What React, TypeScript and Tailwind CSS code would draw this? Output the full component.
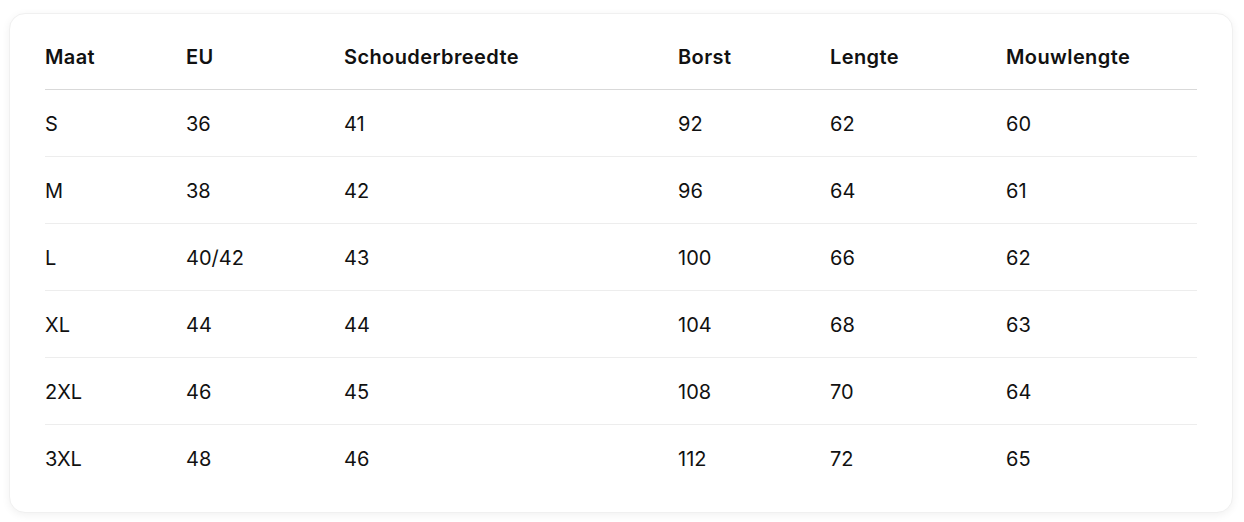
const headers = ["Maat", "EU", "Schouderbreedte", "Borst", "Lengte", "Mouwlengte"];

const rows = [
  ["S", "36", "41", "92", "62", "60"],
  ["M", "38", "42", "96", "64", "61"],
  ["L", "40/42", "43", "100", "66", "62"],
  ["XL", "44", "44", "104", "68", "63"],
  ["2XL", "46", "45", "108", "70", "64"],
  ["3XL", "48", "46", "112", "72", "65"],
];

const colWidths = ["w-[141px]", "w-[158px]", "w-[334px]", "w-[152px]", "w-[176px]", ""];

export default function App() {
  return (
    <div className="min-h-screen bg-white p-[9px] pt-[13px] font-['Inter',sans-serif] text-[#111]">
      <div className="w-[1224px] rounded-2xl border border-[#f0f0f0] bg-white px-[35px] pt-[9px] pb-[21px] shadow-[0_2px_8px_rgba(0,0,0,0.06)]">
        <table className="w-full border-collapse text-left">
          <thead>
            <tr className="border-b border-[#d9d9d9]">
              {headers.map((h, i) => (
                <th
                  key={h}
                  className={`${colWidths[i]} pt-[21px] pb-[19px] text-[20px] leading-[26px] font-semibold tracking-[0.4px]`}
                >
                  {h}
                </th>
              ))}
            </tr>
          </thead>
          <tbody>
            {rows.map((row, r) => (
              <tr
                key={row[0]}
                className={r < rows.length - 1 ? "border-b border-[#ededed]" : ""}
              >
                {row.map((cell, i) => (
                  <td key={i} className="pt-[21px] pb-[19px] text-[20px] leading-[26px] font-normal">
                    {cell}
                  </td>
                ))}
              </tr>
            ))}
          </tbody>
        </table>
      </div>
    </div>
  );
}
